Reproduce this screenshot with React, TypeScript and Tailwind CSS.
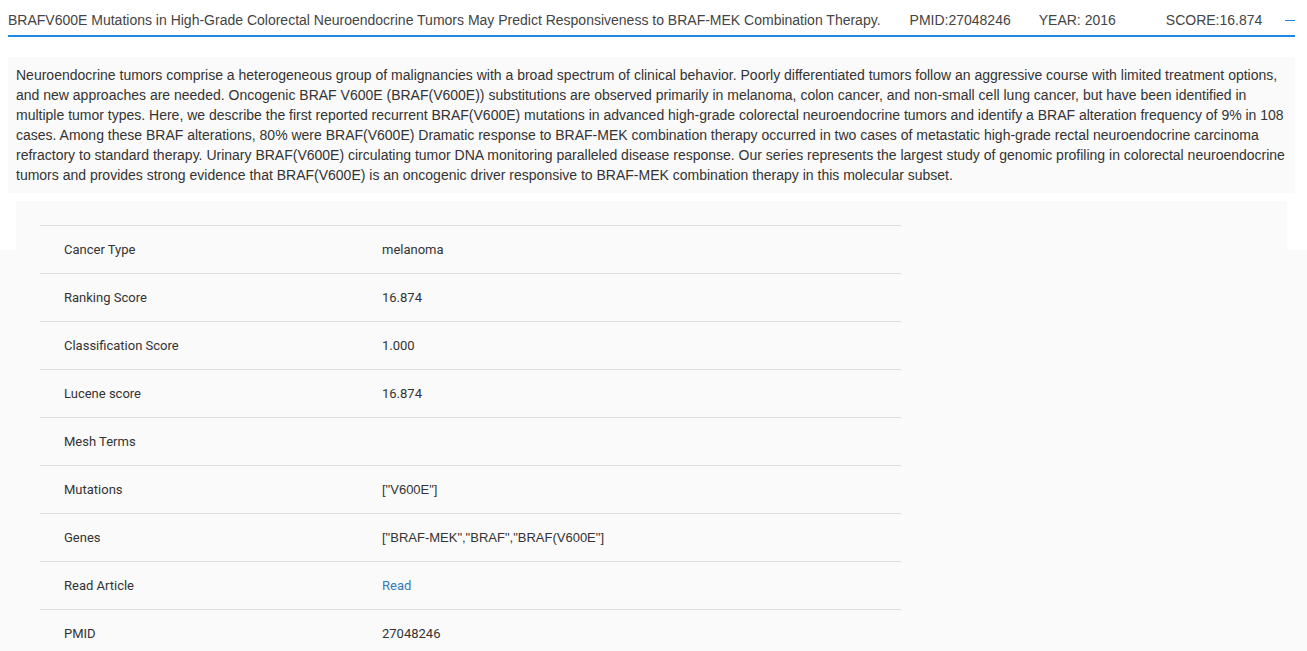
import React from "react";

const rows: { label: string; value: string; link?: boolean; mono?: boolean }[] = [
  { label: "Cancer Type", value: "melanoma" },
  { label: "Ranking Score", value: "16.874" },
  { label: "Classification Score", value: "1.000" },
  { label: "Lucene score", value: "16.874" },
  { label: "Mesh Terms", value: "" },
  { label: "Mutations", value: '["V600E"]', mono: true },
  { label: "Genes", value: '["BRAF-MEK","BRAF","BRAF(V600E"]', mono: true },
  { label: "Read Article", value: "Read", link: true },
  { label: "PMID", value: "27048246" },
];

const abstract =
  "Neuroendocrine tumors comprise a heterogeneous group of malignancies with a broad spectrum of clinical behavior. Poorly differentiated tumors follow an aggressive course with limited treatment options, and new approaches are needed. Oncogenic BRAF V600E (BRAF(V600E)) substitutions are observed primarily in melanoma, colon cancer, and non-small cell lung cancer, but have been identified in multiple tumor types. Here, we describe the first reported recurrent BRAF(V600E) mutations in advanced high-grade colorectal neuroendocrine tumors and identify a BRAF alteration frequency of 9% in 108 cases. Among these BRAF alterations, 80% were BRAF(V600E) Dramatic response to BRAF-MEK combination therapy occurred in two cases of metastatic high-grade rectal neuroendocrine carcinoma refractory to standard therapy. Urinary BRAF(V600E) circulating tumor DNA monitoring paralleled disease response. Our series represents the largest study of genomic profiling in colorectal neuroendocrine tumors and provides strong evidence that BRAF(V600E) is an oncogenic driver responsive to BRAF-MEK combination therapy in this molecular subset.";

export default function App() {
  return (
    <div className="min-h-screen bg-[linear-gradient(to_bottom,#ffffff_250px,#fafafa_250px)] font-['Liberation_Sans',Arial,sans-serif] text-[#333]">
      <div className="ml-2 w-[1287px]">
        {/* Article header */}
        <div className="flex items-center pt-[10px] pb-[5px] border-b-2 border-[#1e88e5] text-[14px] leading-5 text-[#444]">
          <span>
            BRAFV600E Mutations in High-Grade Colorectal Neuroendocrine Tumors May Predict Responsiveness to BRAF-MEK
            Combination Therapy.
          </span>
          <span className="ml-[29px]">PMID:27048246</span>
          <span className="ml-[28px]">YEAR: 2016</span>
          <span className="ml-[50px]">SCORE:16.874</span>
          <span className="ml-auto w-[10px] h-px bg-[#1e88e5]" />
        </div>

        {/* Abstract */}
        <div className="mt-5 bg-[#fafafa] px-2 py-2 text-[14px] leading-5 text-[#333]">{abstract}</div>

        {/* Details */}
        <div className="mx-2 mt-2 bg-[#fafafa] p-6">
          <table className="w-[861px] border-collapse font-['Roboto',sans-serif] text-[13px] text-[#333]">
            <tbody>
              {rows.map((r) => (
                <tr key={r.label} className="border-t border-[#dcdcdc] h-12">
                  <td className="w-[318px] pl-6 align-middle">{r.label}</td>
                  <td className={r.mono ? "pl-6 align-middle font-['Liberation_Sans',Arial,sans-serif]" : "pl-6 align-middle"}>
                    {r.link ? <a className="text-[#337ab7]">{r.value}</a> : r.value}
                  </td>
                </tr>
              ))}
            </tbody>
          </table>
        </div>
      </div>
    </div>
  );
}
